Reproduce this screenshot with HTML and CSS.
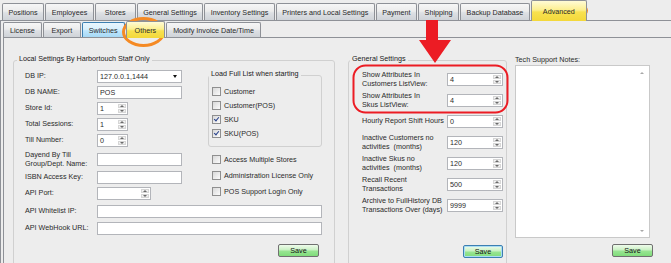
FILE: index.html
```html
<!DOCTYPE html>
<html lang="en">
<head>
    <meta charset="UTF-8">
    <meta name="viewport" content="width=device-width, initial-scale=1.0">
    <title>Advanced - Others</title>
    <link rel="stylesheet" href="styles.css">
</head>
<body>
<div class="window">
    <ul class="tabs main-tabs">
        <li>Positions</li>
        <li>Employees</li>
        <li>Stores</li>
        <li>General Settings</li>
        <li>Inventory Settings</li>
        <li>Printers and Local Settings</li>
        <li>Payment</li>
        <li>Shipping</li>
        <li>Backup Database</li>
        <li class="active">Advanced</li>
    </ul>
    <div class="outer-panel">
        <ul class="tabs sub-tabs">
            <li>License</li>
            <li>Export</li>
            <li class="hover">Switches</li>
            <li class="active">Others</li>
            <li>Modify Invoice Date/Time</li>
        </ul>
        <div class="inner-panel">

            <!-- local settings -->
            <fieldset class="group local">
                <legend>Local Settings By Harbortouch Staff Only</legend>
                <div class="local-top">
                    <div class="fields">
                        <div class="row">
                            <label>DB IP:</label>
                            <div class="combo"><span>127.0.0.1,1444</span><i class="drop"></i></div>
                        </div>
                        <div class="row">
                            <label>DB NAME:</label>
                            <input class="text" type="text" value="POS">
                        </div>
                        <div class="row">
                            <label>Store Id:</label>
                            <div class="spin short"><span class="val">1</span><span class="spin-btns"><i class="up"></i><i class="down"></i></span></div>
                        </div>
                        <div class="row">
                            <label>Total Sessions:</label>
                            <div class="spin short"><span class="val">1</span><span class="spin-btns"><i class="up"></i><i class="down"></i></span></div>
                        </div>
                        <div class="row">
                            <label>Till Number:</label>
                            <div class="spin short"><span class="val">0</span><span class="spin-btns"><i class="up"></i><i class="down"></i></span></div>
                        </div>
                        <div class="row tall">
                            <label>Dayend By Till<br>Group/Dept. Name:</label>
                            <input class="text" type="text">
                        </div>
                        <div class="row">
                            <label>ISBN Access Key:</label>
                            <input class="text" type="text">
                        </div>
                        <div class="row">
                            <label>API Port:</label>
                            <div class="spin port"><span class="val"></span><span class="spin-btns"><i class="up"></i><i class="down"></i></span></div>
                        </div>
                    </div>
                    <div class="side">
                        <fieldset class="group load-list">
                            <legend>Load Full List when starting</legend>
                            <div class="check-list">
                                <div class="check"><span class="box"></span>Customer</div>
                                <div class="check"><span class="box"></span>Customer(POS)</div>
                                <div class="check"><span class="box on"></span>SKU</div>
                                <div class="check"><span class="box on"></span>SKU(POS)</div>
                            </div>
                        </fieldset>
                        <div class="check-list side-checks">
                            <div class="check"><span class="box"></span>Access Multiple Stores</div>
                            <div class="check"><span class="box"></span>Administration License Only</div>
                            <div class="check"><span class="box"></span>POS Support Login Only</div>
                        </div>
                    </div>
                </div>
                <div class="wide-rows">
                    <div class="row">
                        <label>API Whitelist IP:</label>
                        <input class="text wide" type="text">
                    </div>
                    <div class="row">
                        <label>API WebHook URL:</label>
                        <input class="text wide" type="text">
                    </div>
                </div>
                <div class="actions">
                    <button class="save">Save</button>
                </div>
            </fieldset>

            <!-- general settings -->
            <fieldset class="group general">
                <legend>General Settings</legend>
                <div class="settings">
                    <div class="setting">
                        <label>Show Attributes In<br>Customers ListView:</label>
                        <div class="spin"><span class="val">4</span><span class="spin-btns"><i class="up"></i><i class="down"></i></span></div>
                    </div>
                    <div class="setting">
                        <label>Show Attributes In<br>Skus ListView:</label>
                        <div class="spin"><span class="val">4</span><span class="spin-btns"><i class="up"></i><i class="down"></i></span></div>
                    </div>
                    <div class="setting">
                        <label>Hourly Report Shift Hours</label>
                        <div class="spin"><span class="val">0</span><span class="spin-btns"><i class="up"></i><i class="down"></i></span></div>
                    </div>
                    <div class="setting">
                        <label>Inactive Customers no<br>activities &nbsp;(months)</label>
                        <div class="spin"><span class="val">120</span><span class="spin-btns"><i class="up"></i><i class="down"></i></span></div>
                    </div>
                    <div class="setting">
                        <label>Inactive Skus no<br>activities &nbsp;(months)</label>
                        <div class="spin"><span class="val">120</span><span class="spin-btns"><i class="up"></i><i class="down"></i></span></div>
                    </div>
                    <div class="setting">
                        <label>Recall Recent<br>Transactions</label>
                        <div class="spin"><span class="val">500</span><span class="spin-btns"><i class="up"></i><i class="down"></i></span></div>
                    </div>
                    <div class="setting">
                        <label>Archive to FullHistory DB<br>Transactions Over (days)</label>
                        <div class="spin"><span class="val">9999</span><span class="spin-btns"><i class="up"></i><i class="down"></i></span></div>
                    </div>
                </div>
                <div class="actions">
                    <button class="save focused">Save</button>
                </div>
            </fieldset>

            <!-- tech notes -->
            <div class="notes">
                <div class="notes-title">Tech Support Notes:</div>
                <div class="notes-box">
                    <div class="scroll"><i class="up"></i><i class="down"></i></div>
                </div>
                <div class="actions">
                    <button class="save">Save</button>
                </div>
            </div>
        </div>
    </div>

    <!-- highlight marks drawn on top of the screenshot -->
    <svg class="marks" width="671" height="263" viewBox="0 0 671 263">
        <ellipse cx="143.5" cy="32" rx="20" ry="13.5" fill="none" stroke="#f58a24" stroke-width="3"/>
        <ellipse cx="562.5" cy="10.5" rx="24" ry="9" fill="none" stroke="#f58a24" stroke-width="3"/>
        <path d="M426 20 H438 V40 H451 L435 63 L419 40 H426 Z" fill="#ec1c24"/>
        <rect x="353.5" y="65.5" width="154" height="47" rx="12" fill="none" stroke="#ec1c24" stroke-width="2"/>
    </svg>
</div>
</body>
</html>
```

FILE: styles.css
```css
* {
    box-sizing: border-box;
}

body {
    margin: 0;
    font-family: "Liberation Sans", Arial, sans-serif;
    font-size: 7.2px;
    color: #2a2a2a;
    background-color: #ededed;
}

.window {
    position: relative;
    width: 671px;
    height: 263px;
    overflow: hidden;
    background-color: #ededed;
}

/* tabs */
.tabs {
    list-style: none;
    margin: 0;
    padding: 0;
    display: flex;
    align-items: flex-end;
    gap: 1px;
}

.tabs li {
    height: 15px;
    min-width: 38px;
    padding: 0 6px;
    border: 1px solid #8e9197;
    border-bottom: none;
    border-radius: 2px 2px 0 0;
    background: linear-gradient(#f6f6f6, #ececec 45%, #dde0e4 55%, #cfd3d8);
    display: flex;
    align-items: center;
    justify-content: center;
    white-space: nowrap;
}

.tabs li.hover {
    border-color: #3c7fb1;
    background: linear-gradient(#eaf6fd, #d9f0fc 45%, #bee6fd 55%, #a7d9f5);
}

.tabs li.active {
    z-index: 1;
    margin-bottom: -1px;
    background: linear-gradient(#fffbd6, #fcef8f 45%, #f8e150 55%, #f3d83a);
}

.main-tabs {
    height: 20px;
    padding-left: 2px;
}

.main-tabs li {
    height: 17px;
    min-width: 41px;
    padding: 0 5.5px;
}

.main-tabs li.active {
    height: 21px;
    padding: 0 11px;
}

.sub-tabs {
    height: 16px;
}

.sub-tabs li.active {
    height: 17px;
    padding: 0 8px;
}

.outer-panel {
    border-top: 1px solid #8e9197;
    border-left: 1px solid #8e9197;
    padding-left: 2px;
}

.inner-panel {
    height: 230px;
    border-top: 1px solid #8e9197;
    border-left: 1px solid #8e9197;
    padding: 15.5px 0 0 9px;
    display: flex;
    align-items: flex-start;
}

/* group boxes */
.group {
    margin: 0;
    min-width: 0;
    border: 1px solid #d0d0d0;
    border-radius: 3px;
}

.group legend {
    padding: 0 2px 5px;
    line-height: 9px;
    color: #1a1a1a;
}

.local {
    width: 322px;
    padding: 2.5px 12px 12px 11px;
}

.local > legend {
    margin-left: -8px;
}

.local-top {
    display: flex;
    gap: 26px;
}

.fields {
    width: 157px;
    display: flex;
    flex-direction: column;
    gap: 3px;
}

.row {
    display: flex;
    align-items: center;
    height: 13px;
}

.row label {
    width: 72px;
    flex: none;
    white-space: nowrap;
    line-height: 8.5px;
}

.row.tall {
    height: 17px;
    margin-top: 1px;
}

.wide-rows {
    margin-top: 5px;
    display: flex;
    flex-direction: column;
    gap: 4px;
}

/* inputs */
.text {
    width: 85px;
    height: 13px;
    margin: 0;
    padding: 0 2px;
    border: 1px solid #b3b5ba;
    background: #fff;
    font: inherit;
    color: inherit;
    outline: none;
}

.text.wide {
    width: 225px;
}

.combo {
    width: 85px;
    height: 13px;
    padding: 0 4px 0 2px;
    border: 1px solid #b3b5ba;
    background: #fff;
    display: flex;
    align-items: center;
    justify-content: space-between;
}

.drop {
    border-left: 2.5px solid transparent;
    border-right: 2.5px solid transparent;
    border-top: 3px solid #111;
}

.spin {
    width: 56px;
    height: 13px;
    border: 1px solid #b3b5ba;
    background: #fff;
    display: flex;
}

.spin.short {
    width: 31px;
}

.spin.port {
    width: 54px;
}

.spin .val {
    flex: 1;
    padding-left: 2px;
    line-height: 11px;
}

.spin-btns {
    width: 10px;
    padding: 1px;
    display: flex;
    flex-direction: column;
    gap: 1px;
}

.spin-btns i,
.scroll i {
    flex: 1;
    display: flex;
    align-items: center;
    justify-content: center;
}

.spin-btns i {
    border: 1px solid #d6d6d6;
    background: linear-gradient(#f8f8f8, #e4e4e4);
}

.up::after,
.down::after {
    content: "";
    border-left: 2px solid transparent;
    border-right: 2px solid transparent;
}

.up::after {
    border-bottom: 2px solid #6a6a6a;
}

.down::after {
    border-top: 2px solid #6a6a6a;
}

/* checkboxes */
.side {
    width: 114px;
    margin-top: -1.5px;
}

.load-list {
    padding: 4px 3px 8px 3px;
}

.load-list legend {
    margin-left: -3px;
}

.check-list {
    display: flex;
    flex-direction: column;
    gap: 5px;
}

.side-checks {
    margin-top: 8px;
    padding-left: 4px;
    gap: 7px;
}

.check {
    height: 9px;
    display: flex;
    align-items: center;
    gap: 3px;
    white-space: nowrap;
}

.box {
    width: 9px;
    height: 9px;
    flex: none;
    border: 1px solid #8f8f8f;
    background: linear-gradient(135deg, #d8d8d8, #fbfbfb);
    display: flex;
    align-items: center;
    justify-content: center;
}

.box.on::after {
    content: "";
    width: 2px;
    height: 4px;
    margin-top: -1px;
    border-right: 1.3px solid #27408b;
    border-bottom: 1.3px solid #27408b;
    transform: rotate(40deg);
}

/* general settings */
.general {
    width: 159px;
    margin-left: 13px;
    padding: 3px 3px 12px 13px;
}

.general > legend {
    margin-left: -12px;
}

.settings {
    display: flex;
    flex-direction: column;
    gap: 3px;
}

.setting {
    height: 18px;
    display: flex;
    align-items: center;
}

.setting label {
    width: 85px;
    flex: none;
    white-space: nowrap;
    line-height: 8.5px;
}

/* notes */
.notes {
    width: 138px;
    margin-left: 8px;
}

.notes-title {
    margin-top: 1px;
    line-height: 9px;
}

.notes-box {
    width: 135px;
    height: 173px;
    margin-top: 1.5px;
    border: 1px solid #c9c9c9;
    background: #fff;
    display: flex;
    justify-content: flex-end;
}

.scroll {
    width: 14px;
    padding: 5px 0;
    display: flex;
    flex-direction: column;
    justify-content: space-between;
}

.scroll i {
    flex: none;
    height: 3px;
}

.scroll .up::after {
    border-bottom-color: #a8a8a8;
}

.scroll .down::after {
    border-top-color: #a8a8a8;
}

/* buttons */
.actions {
    display: flex;
    justify-content: flex-end;
}

.local .actions {
    margin-top: 9px;
    padding-right: 3px;
}

.general .actions {
    margin-top: 30.5px;
}

.notes .actions {
    margin-top: 6px;
}

.save {
    width: 41px;
    height: 13px;
    padding: 0;
    border: 1px solid #707070;
    border-radius: 2px;
    background: linear-gradient(#effbec, #c9f1c3 45%, #98e592 55%, #80dc7b);
    font: inherit;
    color: #111;
}

.save.focused {
    width: 40px;
    border-color: #3c7fb1;
    box-shadow: inset 0 0 0 1px #a9dcf5;
}

/* annotation layer */
.marks {
    position: absolute;
    left: 0;
    top: 0;
    pointer-events: none;
}
```
